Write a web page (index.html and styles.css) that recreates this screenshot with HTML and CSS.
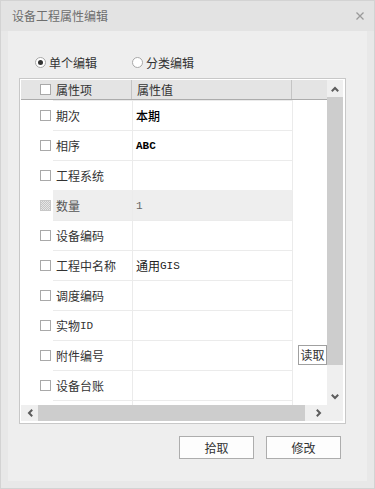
FILE: index.html
```html
<!DOCTYPE html>
<html lang="zh-CN">
<head>
<meta charset="utf-8">
<title>设备工程属性编辑</title>
<link rel="stylesheet" href="styles.css">
</head>
<body>
<div class="win">
  <div class="titlebar">
    <span class="title">设备工程属性编辑</span>
    <svg class="close" width="8" height="8" viewBox="0 0 8 8"><path d="M0.5 0.5L7.5 7.5M7.5 0.5L0.5 7.5" stroke="#9a9a9a" stroke-width="1.3" fill="none"/></svg>
  </div>
  <div class="frame">
    <div class="panel">
      <div class="radios">
        <label class="radio"><span class="circle on"><span class="dot"></span></span><span>单个编辑</span></label>
        <label class="radio"><span class="circle"></span><span>分类编辑</span></label>
      </div>
      <div class="gridbox">
        <div class="gridview">
          <div class="viewport">
            <div class="hrow">
              <div class="hck"><span class="cb"></span></div>
              <div class="hname">属性项</div>
              <div class="hval">属性值</div>
              <div class="hextra"></div>
            </div>
            <div class="row"><div class="ck"><span class="cb"></span></div><div class="name">期次</div><div class="val bold">本期</div><div class="extra"></div></div>
            <div class="row"><div class="ck"><span class="cb"></span></div><div class="name">相序</div><div class="val bold"><span class="a">ABC</span></div><div class="extra"></div></div>
            <div class="row"><div class="ck"><span class="cb"></span></div><div class="name">工程系统</div><div class="val"></div><div class="extra"></div></div>
            <div class="row dis"><div class="ck"><span class="cb"></span></div><div class="name">数量</div><div class="val"><span class="a">1</span></div><div class="extra"></div></div>
            <div class="row"><div class="ck"><span class="cb"></span></div><div class="name">设备编码</div><div class="val"></div><div class="extra"></div></div>
            <div class="row"><div class="ck"><span class="cb"></span></div><div class="name">工程中名称</div><div class="val">通用<span class="a">GIS</span></div><div class="extra"></div></div>
            <div class="row"><div class="ck"><span class="cb"></span></div><div class="name">调度编码</div><div class="val"></div><div class="extra"></div></div>
            <div class="row"><div class="ck"><span class="cb"></span></div><div class="name">实物<span class="a">ID</span></div><div class="val"></div><div class="extra"></div></div>
            <div class="row"><div class="ck"><span class="cb"></span></div><div class="name">附件编号</div><div class="val"></div><div class="extra"><button class="read">读取</button></div></div>
            <div class="row"><div class="ck"><span class="cb"></span></div><div class="name">设备台账</div><div class="val"></div><div class="extra"></div></div>
            <div class="row"><div class="ck"></div><div class="name"></div><div class="val"></div><div class="extra"></div></div>
          </div>
          <div class="vscroll">
            <div class="sbtn"><svg width="8" height="6" viewBox="0 0 8 6"><polyline points="0.8,5.2 4,2 7.2,5.2" fill="none" stroke="#5c5c5c" stroke-width="2"/></svg></div>
            <div class="vthumb"></div>
            <div class="vtrack"></div>
            <div class="sbtn"><svg width="8" height="6" viewBox="0 0 8 6"><polyline points="0.8,0.8 4,4 7.2,0.8" fill="none" stroke="#5c5c5c" stroke-width="2"/></svg></div>
          </div>
          <div class="hscroll">
            <div class="sbtn"><svg width="6" height="8" viewBox="0 0 6 8"><polyline points="5.2,0.8 2,4 5.2,7.2" fill="none" stroke="#5c5c5c" stroke-width="2"/></svg></div>
            <div class="hthumb"></div>
            <div class="htrack"></div>
            <div class="sbtn"><svg width="6" height="8" viewBox="0 0 6 8"><polyline points="0.8,0.8 4,4 0.8,7.2" fill="none" stroke="#5c5c5c" stroke-width="2"/></svg></div>
          </div>
          <div class="corner"></div>
        </div>
      </div>
      <div class="buttons">
        <button class="btn">拾取</button>
        <button class="btn">修改</button>
      </div>
    </div>
  </div>
</div>
</body>
</html>
```
FILE: styles.css
```css
* { box-sizing: border-box; }
html, body { margin: 0; padding: 0; }
body {
  width: 375px;
  height: 489px;
  overflow: hidden;
  background: #ffffff;
  font-family: "Noto Sans CJK SC", "Noto Sans", sans-serif;
  font-size: 12px;
  color: #333333;
}
.win {
  width: 375px;
  height: 489px;
  border: 1px solid #d3d3d3;
  background: #e8e8e8;
  display: flex;
  flex-direction: column;
}
.titlebar {
  flex: none;
  height: 30px;
  background: #e3e3e3;
  display: flex;
  align-items: center;
  justify-content: space-between;
  padding: 0 10px 0 11px;
}
.title { color: #6e6e6e; font-size: 12px; line-height: 14px; }
.close { display: block; }
.frame {
  flex: 1;
  display: flex;
  padding: 0 7px 7px 7px;
}
.panel {
  flex: 1;
  background: #eeeeee;
  display: flex;
  flex-direction: column;
  padding: 24px 0 0 11px;
}
.radios {
  display: flex;
  align-items: center;
  height: 15px;
  margin-left: 16px;
  gap: 35px;
}
.radio {
  display: flex;
  align-items: center;
  gap: 3px;
  line-height: 14px;
}
.circle {
  width: 11px;
  height: 11px;
  border-radius: 50%;
  border: 1px solid #a8a8a8;
  background: #ffffff;
  display: flex;
  align-items: center;
  justify-content: center;
}
.circle .dot {
  width: 5px;
  height: 5px;
  border-radius: 50%;
  background: #333333;
}
.gridbox {
  margin-top: 8px;
  width: 327px;
  height: 346px;
  border: 1px solid #c8c8c8;
  background: #ffffff;
  padding: 1px 2px 2px 1px;
}
.gridview {
  display: grid;
  grid-template-columns: 306px 16px;
  grid-template-rows: 325px 16px;
}
.viewport {
  overflow: hidden;
  background: #ffffff;
}
.hrow {
  display: grid;
  grid-template-columns: 32px 79px 160px 35px;
  height: 20px;
  background: #e4e4e4;
  border-bottom: 1px solid #acacac;
}
.hck { display: flex; align-items: center; padding-left: 19px; }
.hname, .hval {
  display: flex;
  align-items: center;
  border-right: 1px solid #c4c4c4;
  line-height: 14px;
}
.hname { padding-left: 3px; }
.hval { padding-left: 5px; }
.cb {
  display: block;
  width: 11px;
  height: 11px;
  border: 1px solid #a9a9a9;
  background: #ffffff;
}
.row {
  display: grid;
  grid-template-columns: 32px 80px 160px 34px;
  height: 30px;
}
.ck { display: flex; align-items: center; padding-left: 19px; }
.name, .val {
  display: flex;
  align-items: center;
  border-top: 1px solid #ebebeb;
  border-right: 1px solid #ebebeb;
  line-height: 14px;
  white-space: nowrap;
}
.name { padding-left: 3px; }
.val { padding-left: 3px; color: #222222; }
.val.bold { font-weight: 500; color: #000000; }
.val.bold .a { font-weight: bold; }
.a { font-family: "Liberation Mono", monospace; font-size: 11px; }
.extra { display: flex; align-items: center; justify-content: flex-end; }
.row.dis .name, .row.dis .val { background: #eeeeee; border-top-color: #eeeeee; }
.row.dis .name { color: #555555; }
.row.dis .val { color: #666666; }
.row.dis .cb {
  border-color: #c8c8c8;
  background: repeating-conic-gradient(#c4c4c4 0 25%, #e6e6e6 0 50%) 0 0 / 2px 2px;
}
.read {
  width: 29px;
  height: 20px;
  padding: 0;
  margin: 0;
  border: 1px solid #a0a0a0;
  background: #ffffff;
  font-family: inherit;
  font-size: 12px;
  color: #333333;
  line-height: 14px;
}
.vscroll {
  display: flex;
  flex-direction: column;
  background: #efefef;
}
.sbtn {
  flex: none;
  width: 17px;
  height: 17px;
  display: flex;
  align-items: center;
  justify-content: center;
}
.vscroll .sbtn { width: 16px; }
.vthumb { flex: none; height: 268px; background: #cdcdcd; }
.vtrack { flex: 1; }
.hscroll {
  display: flex;
  background: #efefef;
}
.hscroll .sbtn { height: 16px; }
.hthumb { flex: none; width: 267px; background: #cdcdcd; }
.htrack { flex: 1; }
.corner { background: #efefef; }
.buttons {
  display: flex;
  justify-content: flex-end;
  gap: 12px;
  padding-right: 26px;
  margin-top: 12px;
}
.btn {
  width: 75px;
  height: 23px;
  padding: 0;
  border: 1px solid #adadad;
  background: #fdfdfd;
  font-family: inherit;
  font-size: 12px;
  color: #333333;
  line-height: 14px;
}
```
